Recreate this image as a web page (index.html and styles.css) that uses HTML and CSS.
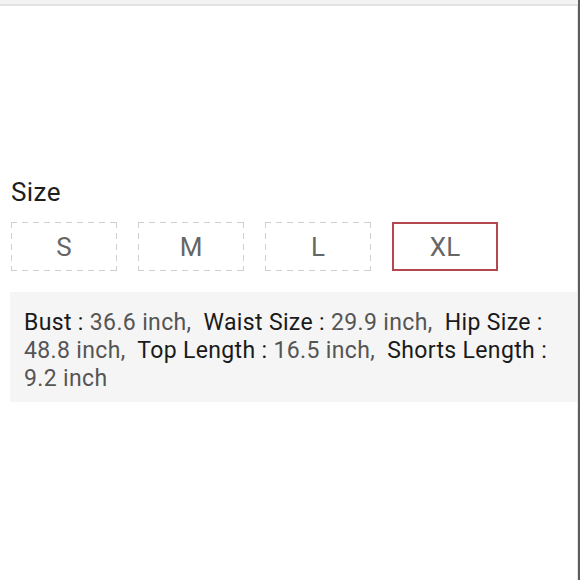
FILE: index.html
```html
<!DOCTYPE html>
<html>
<head>
<meta charset="utf-8">
<link rel="stylesheet" href="styles.css">
</head>
<body>
<div class="page">
  <div class="topbar"></div>
  <div class="content">
    <div class="title">Size</div>
    <div class="sizes">
      <div class="size">S</div>
      <div class="size">M</div>
      <div class="size">L</div>
      <div class="size active">XL</div>
    </div>
    <div class="info">
      <span class="lbl">Bust :</span> <span class="val">36.6 inch,</span>&nbsp; <span class="lbl">Waist Size :</span> <span class="val">29.9 inch,</span>&nbsp; <span class="lbl">Hip Size :</span> <span class="val">48.8 inch,</span>&nbsp; <span class="lbl">Top Length :</span> <span class="val">16.5 inch,</span>&nbsp; <span class="lbl">Shorts Length :</span> <span class="val">9.2 inch</span>
    </div>
  </div>
</div>
</body>
</html>
```

FILE: styles.css
```css
html, body {
  margin: 0;
  padding: 0;
  background: #ffffff;
}
.page {
  width: 578px;
  height: 580px;
  border-right: 2px solid #5c5c5c;
  box-shadow: inset -1px 0 0 #e6e6e6;
  font-family: Roboto, "Liberation Sans", sans-serif;
  overflow: hidden;
}
.topbar {
  height: 4px;
  background: #f3f3f3;
  border-bottom: 2px solid #e2e2e2;
}
.content {
  padding-left: 10px;
  padding-top: 171px;
}
.title {
  font-size: 26px;
  line-height: 30px;
  letter-spacing: 0.4px;
  color: #1e1e1e;
  padding-left: 1px;
}
.sizes {
  display: flex;
  gap: 21px;
  margin-top: 15px;
  padding-left: 1px;
}
.size {
  box-sizing: border-box;
  width: 106px;
  height: 49px;
  background:
    repeating-linear-gradient(90deg, #cfcfcf 0 6px, transparent 6px 11px) left top / 100% 1px no-repeat,
    repeating-linear-gradient(90deg, #cfcfcf 0 6px, transparent 6px 11px) left bottom / 100% 1px no-repeat,
    repeating-linear-gradient(180deg, #cfcfcf 0 6px, transparent 6px 11px) left top / 1px 100% no-repeat,
    repeating-linear-gradient(180deg, #cfcfcf 0 6px, transparent 6px 11px) right top / 1px 100% no-repeat;
  display: flex;
  align-items: center;
  justify-content: center;
  font-size: 26px;
  color: #666666;
}
.size.active {
  background: none;
  border: 2px solid #b5474e;
}
.info {
  margin-top: 21px;
  width: 567px;
  box-sizing: border-box;
  background: #f5f5f5;
  padding: 17px 12px 9px 14px;
  font-size: 23px;
  letter-spacing: 0.35px;
  line-height: 28px;
}
.lbl {
  color: #1a1a1a;
}
.val {
  color: #555555;
}
```
